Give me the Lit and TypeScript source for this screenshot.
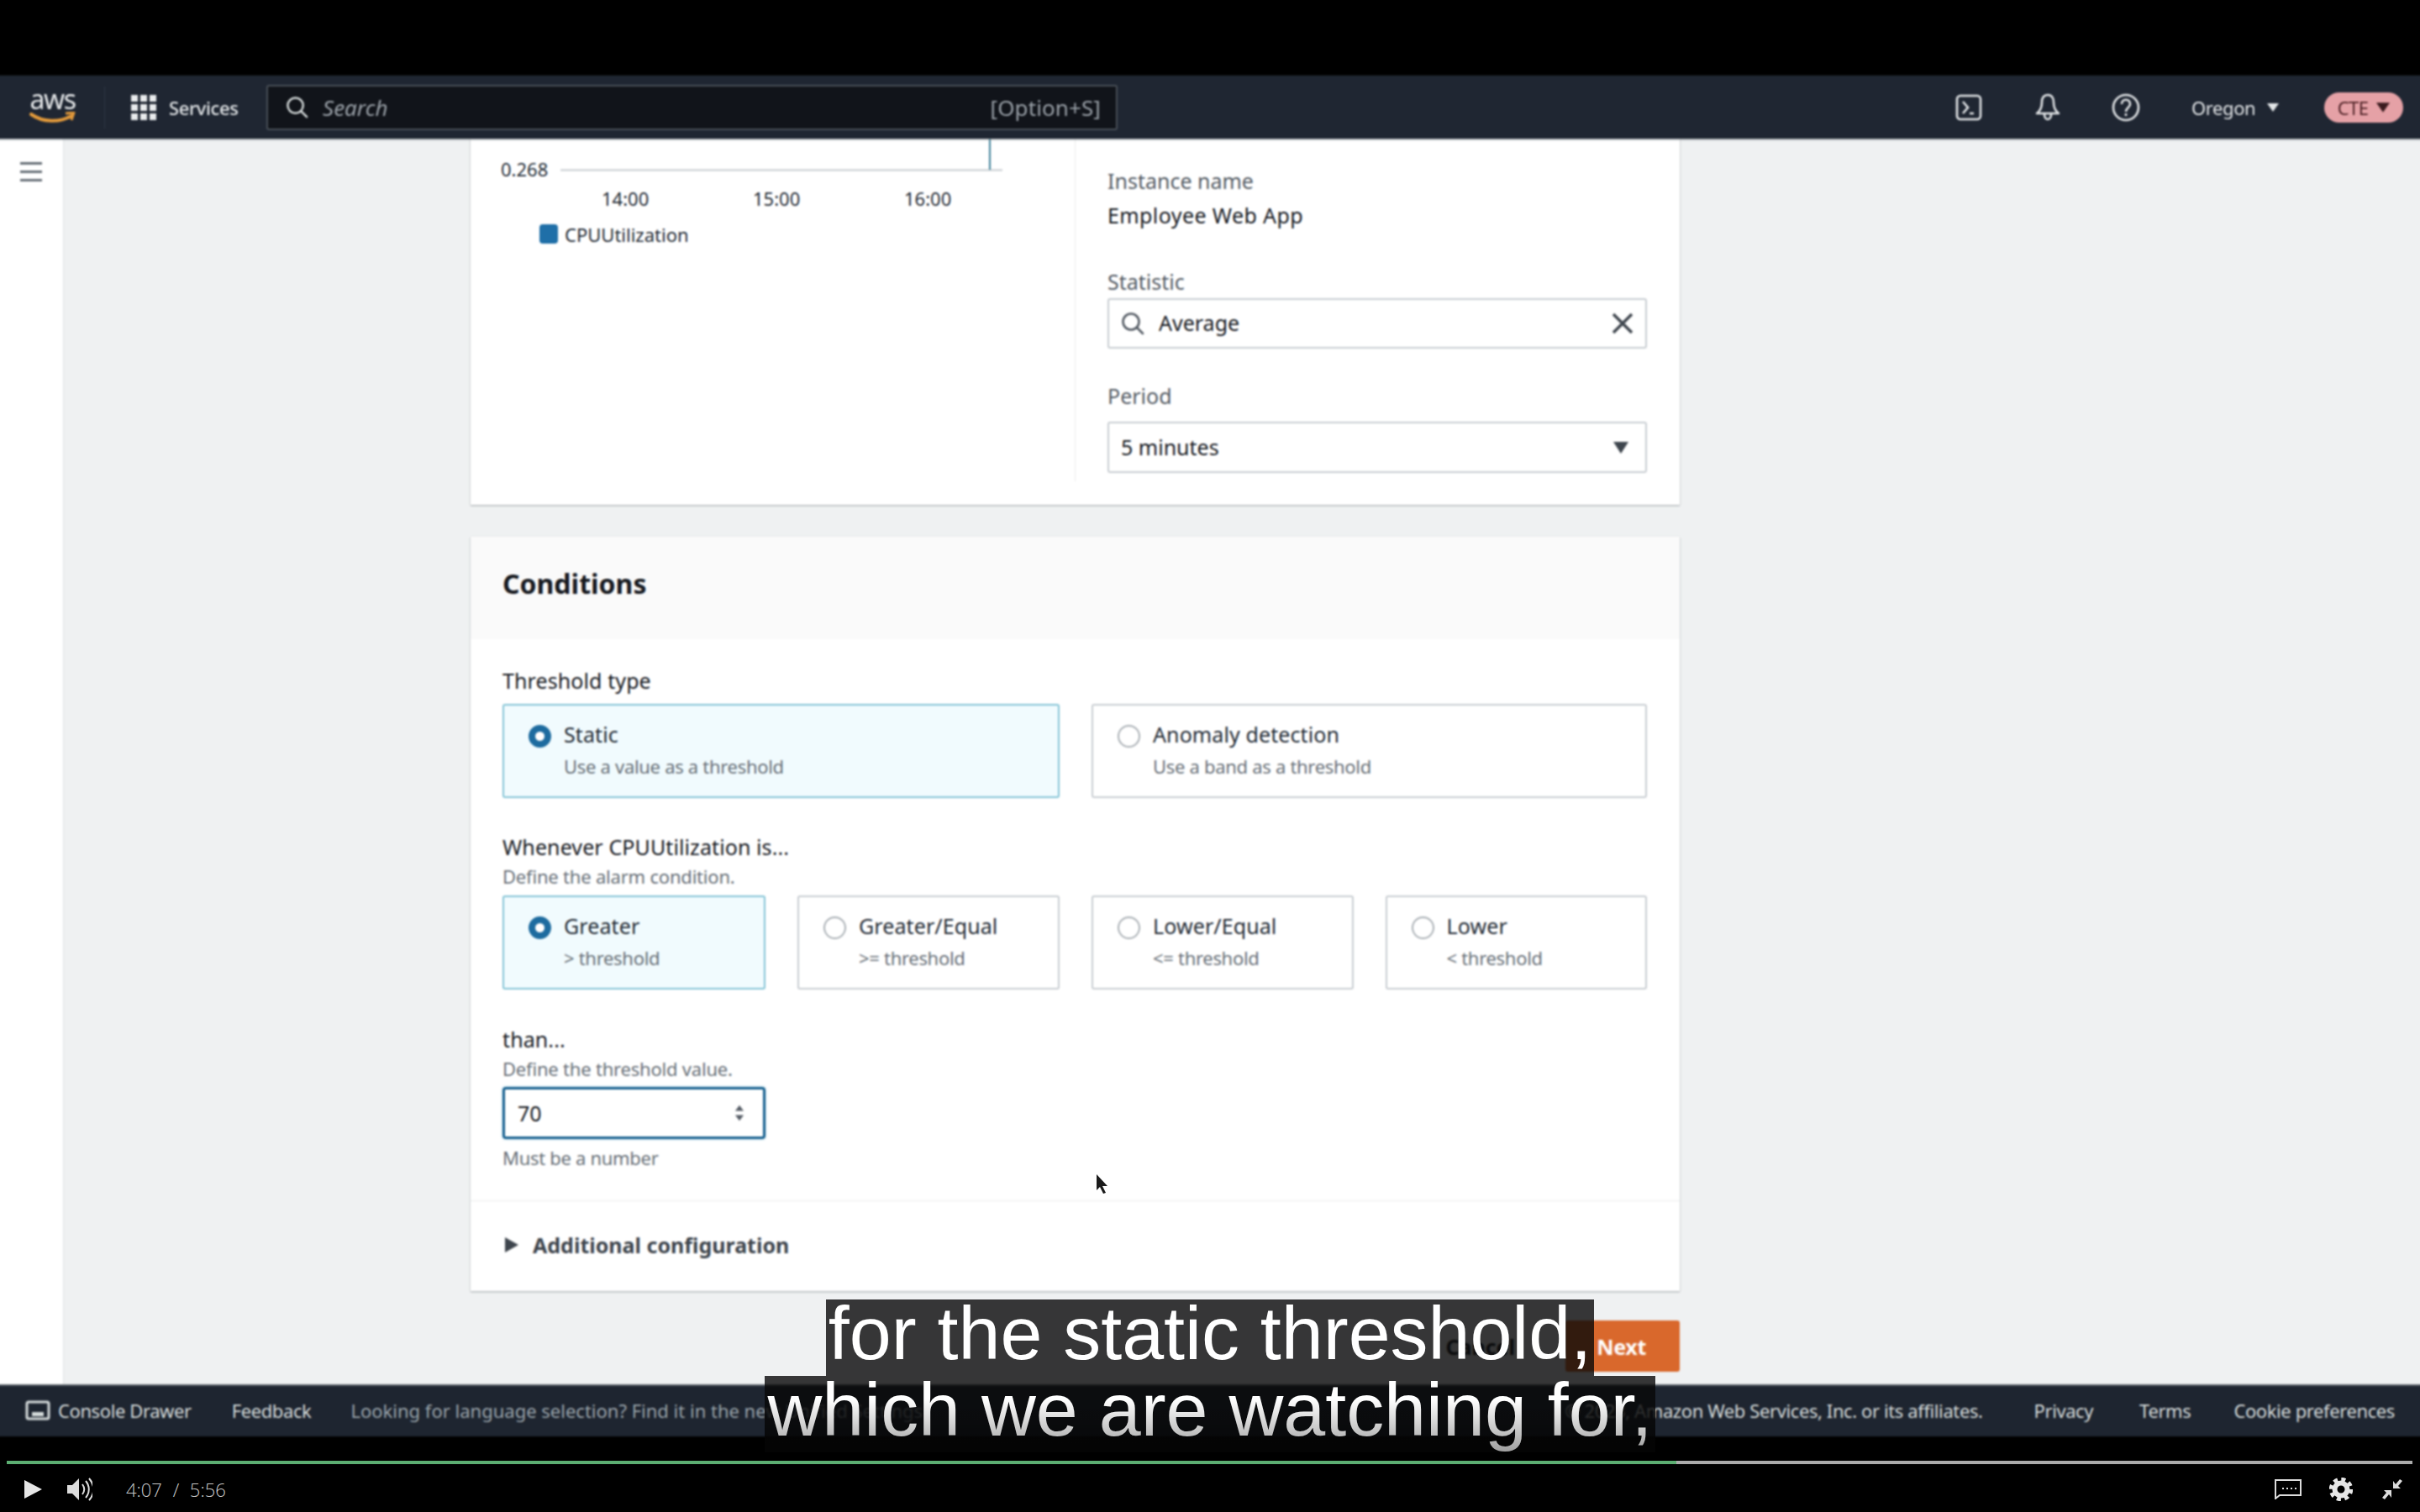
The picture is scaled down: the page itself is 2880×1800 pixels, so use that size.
import { LitElement, css, html } from 'lit';
import { customElement } from 'lit/decorators.js';

const searchIcon = (size: number, color: string) => html`
  <svg width=${size} height=${size} viewBox="0 0 28 28" fill="none" stroke=${color} stroke-width="2.6">
    <circle cx="12" cy="12" r="9.5"></circle>
    <path d="M19 19l7 7" stroke-linecap="round"></path>
  </svg>`;

@customElement('app-root')
export class AppRoot extends LitElement {
  static styles = css`
    :host {
      display: block;
      position: relative;
      width: 2880px;
      height: 1800px;
      overflow: hidden;
      background: #000;
      font-family: 'Noto Sans', 'Liberation Sans', sans-serif;
      font-size: 25px;
      color: #16191f;
    }
    .letterbox { height: 90px; }
    /* 6px wider each side so the blur has no dark fringe at the window edge */
    .screen { filter: blur(0.85px); margin: 0 -6px; }

    /* top nav */
    .nav {
      height: 75px;
      background: #1f2632;
      display: flex;
      align-items: center;
      padding: 0 26px 0 41px;
      box-sizing: border-box;
      color: #e3e6e8;
      box-shadow: 0 1px 2px #7b8288;
      position: relative;
    }
    .logo { width: 57px; display: flex; flex-direction: column; align-items: center; line-height: 26px; margin-left: -1px; }
    .logo span { font-size: 32px; color: #e6e8ea; letter-spacing: -1.5px; height: 28px; line-height: 26px; }
    .sep { width: 1px; height: 50px; background: #2d3644; margin: 0 31px 0 33px; }
    .grid { display: grid; grid-template-columns: repeat(3, 8px); gap: 3px; margin-right: 15px; }
    .grid i { width: 8px; height: 8px; background: #e9ebed; }
    .services { font-size: 22px; width: 84px; letter-spacing: -0.4px; white-space: nowrap; font-weight: 500; }
    .search {
      margin-left: 32px;
      width: 1013px;
      height: 54px;
      box-sizing: border-box;
      background: #11141a;
      border: 2px solid #474e56;
      border-radius: 3px;
      display: flex;
      align-items: center;
      padding: 0 18px 0 21px;
      color: #9aa1a8;
    }
    .search em { margin-left: 17px; font-size: 26px; letter-spacing: 0; }
    .search b { margin-left: auto; font-weight: 400; font-size: 26px; letter-spacing: 0.1px; }
    .nav-right { margin-left: auto; display: flex; align-items: center; }
    .oregon { margin-left: 61px; font-size: 22px; width: 78px; letter-spacing: -0.4px; white-space: nowrap; }
    .nav-caret { margin-left: 12px; width: 14px; height: 10px; }
    .pill {
      margin-left: 54px;
      width: 94px;
      height: 36px;
      border-radius: 18px;
      background: #e5a1a6;
      color: #4f2226;
      font-size: 22px;
      letter-spacing: -0.6px;
      display: flex;
      align-items: center;
      justify-content: center;
      gap: 10px;
    }

    /* page */
    .main { height: 1483px; display: flex; background: #eff1f2; overflow: hidden; }
    .side {
      width: 82px;
      box-sizing: border-box;
      background: #fff;
      border-right: 1px solid #dfe3e6;
      padding: 28px 0 0 30px;
    }
    .burger { display: flex; flex-direction: column; gap: 7px; width: 26px; }
    .burger i { height: 3px; background: #687078; }
    .content { margin-left: 484px; width: 1439px; }
    .card { background: #fff; box-shadow: 0 1px 2px #9ea4a9; }

    .metric { display: flex; padding-bottom: 28px; }
    .chart { width: 720px; height: 408px; flex: none; box-sizing: border-box; border-right: 1px solid #eaeded; }
    .chart svg { display: block; }
    .chart text { font-family: 'Noto Sans', 'Liberation Sans', sans-serif; font-size: 22px; fill: #232b35; letter-spacing: 0; }
    .spec { flex: 1; padding: 37px 39px 0 38px; }
    .label { line-height: 26px; padding-bottom: 4px; color: #16191f; letter-spacing: 0.1px; }
    .spec .label { color: #545b64; letter-spacing: 0; }
    .value { line-height: 26px; padding-bottom: 4px; margin-top: 11px; letter-spacing: 0.4px; }
    .gap-stat { margin-top: 49px; }
    .gap-period { margin-top: 43px; }
    .field {
      height: 60px;
      box-sizing: border-box;
      border: 2px solid #c9ced2;
      border-radius: 3px;
      display: flex;
      align-items: center;
      padding: 0 14px;
      letter-spacing: 0;
    }
    .field span { margin-bottom: 2px; }
    .field.stat { margin-top: 3px; }
    .field.stat span { margin-left: 17px; }
    .field.stat svg:last-child { margin-left: auto; }
    .field.period { margin-top: 14px; height: 61px; justify-content: space-between; padding-right: 20px; }

    .conditions { margin-top: 38px; }
    .cond-head {
      height: 122px;
      background: #fafafa;
      padding-left: 38px;
      display: flex;
      align-items: center;
      font-size: 32px;
      font-weight: 700;
      letter-spacing: 0;
      padding-bottom: 12px;
      box-sizing: border-box;
    }
    .cond-body { padding: 36px 39px 36px 38px; }
    .hint { font-size: 22px; line-height: 22px; padding-bottom: 4px; color: #687078; margin-top: 7px; letter-spacing: -0.2px; }
    .tiles { display: grid; gap: 38px; margin-top: 11px; }
    .tiles.two { grid-template-columns: 663px 1fr; }
    .tiles.four { grid-template-columns: 313px 312px 1fr 1fr; margin-top: 8px; }
    .tile {
      height: 112px;
      box-sizing: border-box;
      border: 2px solid #c9ced2;
      border-radius: 3px;
      display: flex;
      gap: 15px;
      padding: 21px 0 0 29px;
    }
    .tile.on { background: #f1fbfe; border-color: #85c4d6; }
    .radio {
      width: 27px;
      height: 27px;
      box-sizing: border-box;
      flex: none;
      margin-top: 2px;
      border: 2px solid #aab0b5;
      border-radius: 50%;
      background: #fff;
    }
    .on .radio { border: 8px solid #1d6b9f; }
    .tile-name { line-height: 26px; padding-bottom: 4px; letter-spacing: 0.1px; color: #232b35; }
    .tile-sub { font-size: 22px; line-height: 22px; padding-bottom: 4px; margin-top: 10px; color: #687078; letter-spacing: -0.3px; }
    .gap-when { margin-top: 45px; }
    .gap-than { margin-top: 46px; }
    .number {
      width: 313px;
      height: 62px;
      box-sizing: border-box;
      margin-top: 7px;
      border: 3px solid #17608f;
      border-radius: 4px;
      box-shadow: 0 0 3px #8cc4dd;
      display: flex;
      align-items: center;
      justify-content: space-between;
      padding: 0 22px 0 15px;
    }
    .after { font-size: 22px; line-height: 22px; padding-bottom: 4px; color: #687078; margin-top: 11px; letter-spacing: -0.3px; }
    .extra {
      height: 108px;
      border-top: 1px solid #eaeded;
      display: flex;
      align-items: center;
      padding: 0 0 4px 41px;
      box-sizing: border-box;
      gap: 17px;
      font-weight: 700;
      color: #3e454d;
      letter-spacing: 0;
    }
    .extra i {
      width: 0;
      height: 0;
      border-left: 16px solid #3e454d;
      border-top: 9px solid transparent;
      border-bottom: 9px solid transparent;
    }
    .actions { margin-top: 35px; display: flex; justify-content: flex-end; align-items: center; gap: 60px; }
    .cancel { color: #16191f; font-weight: 700; }
    .next {
      width: 136px;
      height: 61px;
      border-radius: 3px;
      background: #d9682c;
      color: #fff;
      font-weight: 700;
      display: flex;
      align-items: center;
      justify-content: flex-end;
      padding-right: 40px;
      box-sizing: border-box;
      letter-spacing: -0.3px;
    }

    /* console footer */
    .foot {
      height: 62px;
      box-sizing: border-box;
      background: #1e2530;
      border-top: 2px solid #5c636a;
      display: flex;
      align-items: center;
      padding: 0 36px 2px;
      font-size: 22px;
      letter-spacing: -0.4px;
      color: #d5dbdb;
      white-space: nowrap;
      overflow: hidden;
    }
    .foot svg { margin-right: 9px; }
    .foot .fb { margin-left: 48px; }
    .foot .msg { margin-left: 47px; color: #99a3aa; letter-spacing: 0; }
    .foot .copy { margin-left: auto; }
    .foot .pv { margin-left: 61px; }
    .foot .tm { margin-left: 55px; }
    .foot .ck { margin-left: 51px; }

    /* video player */
    .player { height: 90px; padding-top: 29px; box-sizing: border-box; }
    .track { height: 4px; margin: 0 9px 0 8px; background: #ababab; }
    .played { height: 4px; background: #5cae72; }
    .controls {
      display: flex;
      align-items: center;
      height: 40px;
      margin-top: 10px;
      padding: 0 20px 0 29px;
      color: #c8c8c8;
      font-size: 22px;
      font-family: 'Open Sans', 'Liberation Sans', sans-serif;
      font-weight: 300;
    }
    .time { margin-left: 40px; word-spacing: 7px; }
    .controls .cc { margin-left: auto; }
    .controls .gear { margin-left: 33px; }
    .controls .shrink { margin-left: 34px; }

    /* overlays */
    .caption {
      position: absolute;
      left: 0;
      right: 0;
      top: 1547px;
      display: flex;
      flex-direction: column;
      align-items: center;
      font-family: 'Liberation Sans', Arial, sans-serif;
      font-size: 89.8px;
      line-height: 81px;
      color: #fff;
    }
    .caption span {
      position: relative;
      background: rgba(8, 8, 8, 0.8);
      padding: 0 3px 10px;
      white-space: pre;
    }
    .caption .low::after {
      content: '';
      position: absolute;
      inset: 0;
      background: linear-gradient(rgba(0, 0, 0, 0) 30%, rgba(0, 0, 0, 0.38));
    }
    .pointer { position: absolute; left: 1304px; top: 1397px; }
  `;

  private tile(name: string, sub: string, on = false) {
    return html`
      <div class="tile ${on ? 'on' : ''}">
        <div class="radio"></div>
        <div>
          <div class="tile-name">${name}</div>
          <div class="tile-sub">${sub}</div>
        </div>
      </div>`;
  }

  private renderNav() {
    return html`
      <div class="nav">
        <div class="logo">
          <span>aws</span>
          <svg width="57" height="18" viewBox="0 0 57 18" fill="none">
            <path d="M3 3c14 10 34 10 48 2" stroke="#e39a3b" stroke-width="4" stroke-linecap="round"></path>
            <path d="M44 2l10-1-3 9" stroke="#e39a3b" stroke-width="3" stroke-linejoin="round"></path>
          </svg>
        </div>
        <div class="sep"></div>
        <div class="grid">${Array.from({ length: 9 }, () => html`<i></i>`)}</div>
        <div class="services">Services</div>
        <div class="search">
          ${searchIcon(27, '#d5dbdb')}
          <em>Search</em>
          <b>[Option+S]</b>
        </div>
        <div class="nav-right">
          <svg width="32" height="32" viewBox="0 0 32 32" fill="none" stroke="#e3e6e8" stroke-width="2.6">
            <rect x="2" y="2" width="28" height="28" rx="4"></rect>
            <path d="M9 9l6 7-6 7M17 23h5"></path>
          </svg>
          <svg style="margin-left:62px" width="32" height="34" viewBox="0 0 32 34" fill="none" stroke="#e3e6e8" stroke-width="2.6">
            <path d="M16 2c-5 0-7 4-7 9 0 6-2 10-6 13h26c-4-3-6-7-6-13 0-5-2-9-7-9z" stroke-linejoin="round"></path>
            <path d="M12 25c0 8 8 8 8 0"></path>
          </svg>
          <svg style="margin-left:60px" width="34" height="34" viewBox="0 0 34 34" fill="none" stroke="#e3e6e8" stroke-width="2.6">
            <circle cx="17" cy="17" r="15"></circle>
            <path d="M12 13c0-7 10-7 10 0 0 4-5 4-5 9"></path>
            <path d="M17 24v3"></path>
          </svg>
          <div class="oregon">Oregon</div>
          <svg class="nav-caret" viewBox="0 0 14 10"><path d="M0 0h14l-7 10z" fill="#e3e6e8"></path></svg>
          <div class="pill">
            <span>CTE</span>
            <svg width="16" height="12" viewBox="0 0 14 10"><path d="M0 0h14l-7 10z" fill="#3a1b1e"></path></svg>
          </div>
        </div>
      </div>`;
  }

  private renderMetric() {
    return html`
      <div class="card metric">
        <div class="chart">
          <svg width="719" height="140" viewBox="0 0 719 140">
            <text x="36" y="45">0.268</text>
            <path d="M107 37.5h526" stroke="#c7ccd0" stroke-width="2"></path>
            <path d="M618 0v37" stroke="#3f8199" stroke-width="2"></path>
            <text x="156" y="80">14:00</text>
            <text x="336" y="80">15:00</text>
            <text x="516" y="80">16:00</text>
            <rect x="82" y="102" width="22" height="23" rx="4" fill="#1f6fa8"></rect>
            <text x="112" y="123">CPUUtilization</text>
          </svg>
        </div>
        <div class="spec">
          <div class="label">Instance name</div>
          <div class="value">Employee Web App</div>
          <div class="label gap-stat">Statistic</div>
          <div class="field stat">
            ${searchIcon(28, '#545b64')}
            <span>Average</span>
            <svg width="26" height="26" viewBox="0 0 26 26" stroke="#3e454d" stroke-width="3.4">
              <path d="M2 2l22 22M24 2L2 24"></path>
            </svg>
          </div>
          <div class="label gap-period">Period</div>
          <div class="field period">
            <span>5 minutes</span>
            <svg width="18" height="14" viewBox="0 0 18 14"><path d="M0 0h18l-9 14z" fill="#3e454d"></path></svg>
          </div>
        </div>
      </div>`;
  }

  private renderConditions() {
    return html`
      <div class="card conditions">
        <div class="cond-head">Conditions</div>
        <div class="cond-body">
          <div class="label">Threshold type</div>
          <div class="tiles two">
            ${this.tile('Static', 'Use a value as a threshold', true)}
            ${this.tile('Anomaly detection', 'Use a band as a threshold')}
          </div>
          <div class="label gap-when">Whenever CPUUtilization is...</div>
          <div class="hint">Define the alarm condition.</div>
          <div class="tiles four">
            ${this.tile('Greater', '> threshold', true)}
            ${this.tile('Greater/Equal', '>= threshold')}
            ${this.tile('Lower/Equal', '<= threshold')}
            ${this.tile('Lower', '< threshold')}
          </div>
          <div class="label gap-than">than...</div>
          <div class="hint">Define the threshold value.</div>
          <div class="number">
            <span>70</span>
            <svg width="12" height="22" viewBox="0 0 14 26" fill="#545b64">
              <path d="M7 2l6 8H1zM7 24l-6-8h12z"></path>
            </svg>
          </div>
          <div class="after">Must be a number</div>
        </div>
        <div class="extra"><i></i><span>Additional configuration</span></div>
      </div>`;
  }

  private renderFooter() {
    return html`
      <div class="foot">
        <svg width="30" height="24" viewBox="0 0 30 24" fill="none" stroke="#d5dbdb" stroke-width="3">
          <rect x="2" y="2" width="26" height="20" rx="2"></rect>
          <rect x="8" y="14" width="14" height="5" fill="#d5dbdb" stroke="none"></rect>
        </svg>
        <span>Console Drawer</span>
        <span class="fb">Feedback</span>
        <span class="msg">Looking for language selection? Find it in the new Unified Settings</span>
        <span class="copy">© 2023, Amazon Web Services, Inc. or its affiliates.</span>
        <span class="pv">Privacy</span>
        <span class="tm">Terms</span>
        <span class="ck">Cookie preferences</span>
      </div>`;
  }

  private renderPlayer() {
    return html`
      <div class="player">
        <div class="track"><div class="played" style="width:${(1987 / 2863) * 100}%"></div></div>
        <div class="controls">
          <svg width="21" height="22" viewBox="0 0 21 22"><path d="M0 0l21 11L0 22z" fill="#e6e6e6"></path></svg>
          <svg style="margin-left:30px" width="30" height="28" viewBox="0 0 30 28" fill="none">
            <path d="M0 9h6l8-8v26l-8-8H0z" fill="#dcdcdc"></path>
            <path d="M18 8c3 4 3 8 0 12M22 4c5 6 5 14 0 20M26 1c7 8 7 18 0 26" stroke="#dcdcdc" stroke-width="2"></path>
          </svg>
          <span class="time">4:07 / 5:56</span>
          <svg class="cc" width="32" height="24" viewBox="0 0 32 24" fill="none" stroke="#dcdcdc" stroke-width="2">
            <path d="M1 1h30v18H6l-5 4z"></path>
            <path d="M9 11h2M14 11h2M19 11h2M24 11h2"></path>
          </svg>
          <svg class="gear" width="28" height="28" viewBox="0 0 28 28" fill="none" stroke="#e6e6e6">
            <circle cx="14" cy="14" r="7.5" stroke-width="6"></circle>
            <circle cx="14" cy="14" r="12" stroke-width="4.5" stroke-dasharray="5 4.42"></circle>
          </svg>
          <svg class="shrink" width="26" height="26" viewBox="0 0 26 26" fill="#dcdcdc">
            <path d="M14 3v9h9l-3-3 5-6-3-2-5 6zM12 23v-9H3l3 3-5 6 3 2 5-6z"></path>
          </svg>
        </div>
      </div>`;
  }

  render() {
    return html`
      <div class="letterbox"></div>
      <div class="screen">
        ${this.renderNav()}
        <div class="main">
          <div class="side">
            <div class="burger"><i></i><i></i><i></i></div>
          </div>
          <div class="content">
            ${this.renderMetric()}
            ${this.renderConditions()}
            <div class="actions">
              <span class="cancel">Cancel</span>
              <div class="next">Next</div>
            </div>
          </div>
        </div>
        ${this.renderFooter()}
      </div>
      ${this.renderPlayer()}
      <svg class="pointer" width="16" height="24" viewBox="0 0 16 24">
        <path d="M1 1l13 14-6 0 4 8-3 1-4-8-4 4z" fill="#1b1b1b"></path>
      </svg>
      <div class="caption">
        <span>for the static threshold,</span>
        <span class="low">which we are watching for,</span>
      </div>
    `;
  }
}
